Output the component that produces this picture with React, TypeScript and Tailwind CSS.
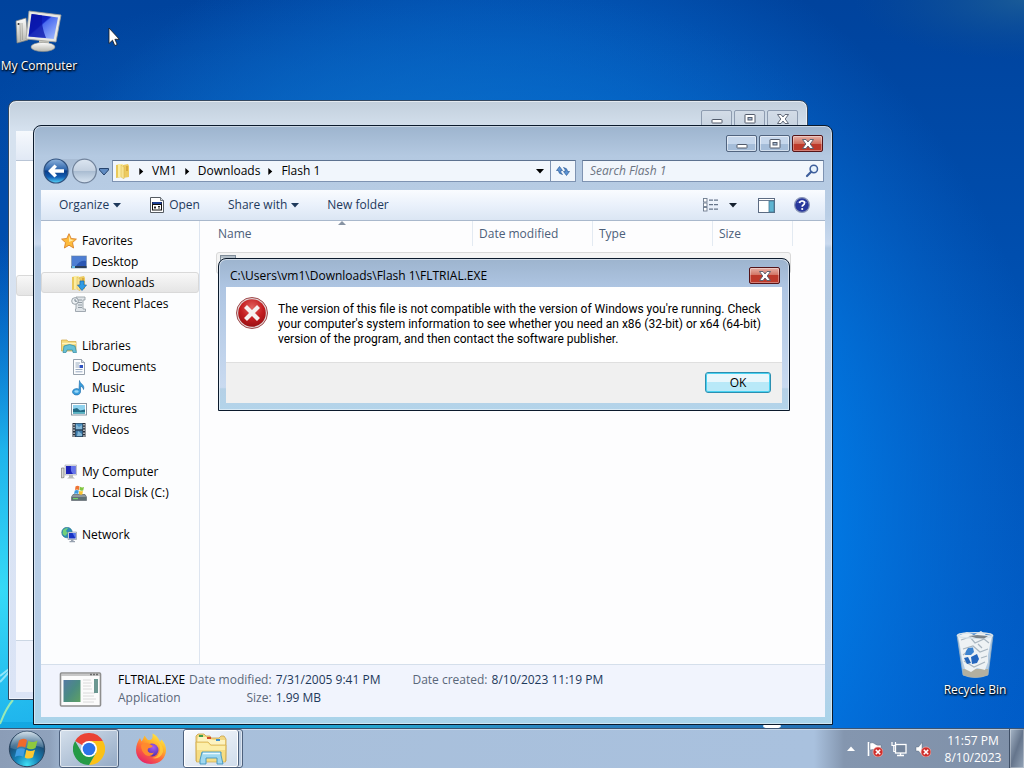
import type { ReactNode } from "react";

const ui = "font-['Open_Sans','Noto_Sans',sans-serif]";

/* ---------- desktop drawings ---------- */

function Wallpaper() {
  return (
    <svg className="absolute inset-0 h-full w-full" viewBox="0 0 1024 768" preserveAspectRatio="none" aria-hidden="true">
      <defs>
        <linearGradient id="wpBase" x1="0" y1="0" x2="0" y2="1">
          <stop offset="0" stopColor="#00439d" />
          <stop offset="0.45" stopColor="#0052b4" />
          <stop offset="1" stopColor="#005dca" />
        </linearGradient>
        <radialGradient id="wpGlow" gradientUnits="userSpaceOnUse" cx="0" cy="0" r="1" gradientTransform="translate(500 520) scale(560 620)">
          <stop offset="0" stopColor="#12a4f5" />
          <stop offset="0.55" stopColor="#0080ec" stopOpacity="0.9" />
          <stop offset="1" stopColor="#0a6fd8" stopOpacity="0" />
        </radialGradient>
        <radialGradient id="wpCyan" gradientUnits="userSpaceOnUse" cx="0" cy="0" r="1" gradientTransform="translate(0 590) scale(300 350)">
          <stop offset="0" stopColor="#36daf7" />
          <stop offset="0.4" stopColor="#22bdf0" stopOpacity="0.9" />
          <stop offset="1" stopColor="#0a80e0" stopOpacity="0" />
        </radialGradient>
        <radialGradient id="wpTop" gradientUnits="userSpaceOnUse" cx="0" cy="0" r="1" gradientTransform="translate(400 130) scale(420 150)">
          <stop offset="0" stopColor="#0c6bc4" stopOpacity="0.8" />
          <stop offset="1" stopColor="#0a5fb8" stopOpacity="0" />
        </radialGradient>
        <radialGradient id="wpCorner" gradientUnits="userSpaceOnUse" cx="0" cy="0" r="1" gradientTransform="translate(1024 0) scale(170 60)">
          <stop offset="0" stopColor="#2a6a94" stopOpacity="0.6" />
          <stop offset="1" stopColor="#145090" stopOpacity="0" />
        </radialGradient>
        <linearGradient id="wpFoot" x1="0" y1="0" x2="1" y2="0">
          <stop offset="0" stopColor="#0aa0dc" stopOpacity="0.6" />
          <stop offset="0.45" stopColor="#27a5cd" />
          <stop offset="0.7" stopColor="#2b80bd" />
          <stop offset="1" stopColor="#2270b4" />
        </linearGradient>
      </defs>
      <rect width="1024" height="768" fill="url(#wpBase)" />
      <rect width="1024" height="768" fill="url(#wpGlow)" />
      <rect width="1024" height="768" fill="url(#wpTop)" />
      <rect width="1024" height="768" fill="url(#wpCyan)" />
      <rect width="1024" height="768" fill="url(#wpCorner)" />
      <rect y="722" width="832" height="8" fill="url(#wpFoot)" />
      <path d="M0 724Q6 708 13 700" stroke="#b6f5a8" strokeWidth="2" fill="none" opacity="0.8" />
      <path d="M0 682L9 672M0 676L9 669" stroke="#d5fbff" strokeWidth="2" fill="none" opacity="0.6" />
      <ellipse cx="772" cy="726" rx="9" ry="3" fill="#fff" />
    </svg>
  );
}

function ComputerArt() {
  return (
    <svg viewBox="0 0 48 48" className="h-12 w-12" aria-hidden="true">
      <defs>
        <linearGradient id="scr" x1="0" y1="0" x2="1" y2="1">
          <stop offset="0" stopColor="#0710a0" />
          <stop offset="0.42" stopColor="#1026c8" />
          <stop offset="0.46" stopColor="#4b6cf0" />
          <stop offset="1" stopColor="#a9c2ff" />
        </linearGradient>
        <linearGradient id="plastic" x1="0" y1="0" x2="0" y2="1">
          <stop offset="0" stopColor="#fdfdfd" />
          <stop offset="1" stopColor="#b5b5ad" />
        </linearGradient>
      </defs>
      <path d="M1 15L11 12L13 34L2 37Z" fill="url(#plastic)" stroke="#84847c" strokeWidth="0.7" />
      <path d="M5 17L5.500 35M7 17L7.500 34" stroke="#a0a098" strokeWidth="0.8" />
      <circle cx="3.500" cy="18" r="1" fill="#333" />
      <path d="M24 33L34 35L34 40L24 39Z" fill="#c8c8c0" />
      <ellipse cx="28" cy="41" rx="12" ry="4.600" fill="url(#plastic)" stroke="#8f8f88" strokeWidth="0.6" />
      <path d="M14 5L46 9L41 36L11 33Z" fill="#e9e9e4" stroke="#a0a09a" strokeWidth="0.8" />
      <path d="M16.500 8L43 11.500L38.800 33L13.500 30.500Z" fill="url(#scr)" />
      <path d="M17 8L27 9.500Q26 20 31 32L13.500 30.500Z" fill="#0a16a8" opacity="0.75" />
    </svg>
  );
}

function BinArt() {
  return (
    <svg viewBox="0 0 48 48" className="h-12 w-12" aria-hidden="true">
      <path d="M6 5L42 5L37 45Q24 50 12 45Z" fill="#dfe6ea" fillOpacity="0.8" stroke="#9db2c2" strokeWidth="0.8" />
      <path d="M12 39L37 39L37 45Q24 50 12 45Z" fill="#b3b0a0" />
      <path d="M7 6L16 2L23 5L30 1L35 5L41 6L39 15L37 25L37 32L34 40L26 38L20 42L14 39L11 29L9 16Z" fill="#eef2f4" />
      <path d="M10 10L19 7L24 13L33 9L38 13M12 19L22 16L29 22L37 19M13 31L23 37L34 32M27 14L31 18M12 25L16 22M30 28L36 26" stroke="#a9b6c0" fill="none" strokeWidth="1.200" />
      <ellipse cx="24" cy="5.500" rx="17.500" ry="2.800" fill="none" stroke="#d9e3ea" strokeWidth="1.400" />
      <path d="M18 6L26 5L37 6L33 8.500L25 8Z" fill="#4d565c" opacity="0.7" />
      <path d="M17 18L22 17.500L23 22L20 25L14 25L15 21Z" fill="#3d83cf" />
      <path d="M13 28L17 27L20 33L16 34Z" fill="#2565b8" />
      <path d="M20 27L26 24L28 29L26 33L21 34Z" fill="#2466be" />
    </svg>
  );
}

function DesktopIcon({ label, className, children }: { label: string; className: string; children: ReactNode }) {
  return (
    <button type="button" className={`absolute flex w-20 flex-col items-center gap-1 ${className}`}>
      {children}
      <span className="text-[12px] leading-4 whitespace-nowrap text-white [text-shadow:1px_1px_2px_#000,0_1px_2px_#000]">{label}</span>
    </button>
  );
}

/* ---------- window chrome ---------- */

function CaptionGlyph({ kind }: { kind: "min" | "max" | "close" }) {
  return (
    <svg viewBox="0 0 14 12" className="h-3 w-[14px]" aria-hidden="true">
      {kind === "min" && <rect x="2" y="6.500" width="10" height="3.500" rx="0.500" fill="#fff" stroke="#525b6b" />}
      {kind === "max" && (
        <>
          <rect x="2" y="1.500" width="10" height="8.500" rx="0.500" fill="#fff" stroke="#525b6b" />
          <rect x="5" y="4.500" width="4" height="2.500" fill="#a9bdd6" stroke="#525b6b" />
        </>
      )}
      {kind === "close" && (
        <path d="M1.500 1.500H5L7 4L9 1.500H12.500L9.200 6L12.500 10.500H9L7 8L5 10.500H1.500L4.800 6Z" fill="#fff" stroke="#525b6b" strokeWidth="0.900" />
      )}
    </svg>
  );
}

const captionTone = {
  back: "border-[#8e9cb0] bg-linear-to-b from-[#d3dce7] to-[#c8d4e1]",
  plain: "border-[#51647f] bg-linear-to-b from-[#c6d7ec] from-50% to-[#a5bdd9] to-50% inset-ring inset-ring-white/50",
  red: "border-[#541418] bg-linear-to-b from-[#e6b0a6] from-0% via-[#d0705f] via-50% to-[#bd3a2b] to-50% inset-ring inset-ring-white/35",
};

function CaptionButton({ kind, tone, label }: { kind: "min" | "max" | "close"; tone: keyof typeof captionTone; label: string }) {
  return (
    <button type="button" aria-label={label} className={`flex h-[17px] w-[31px] items-center justify-center rounded-[2px] border ${captionTone[tone]}`}>
      <CaptionGlyph kind={kind} />
    </button>
  );
}

function CaptionButtons({ active }: { active: boolean }) {
  return (
    <div className="flex gap-[2px]">
      <CaptionButton kind="min" tone={active ? "plain" : "back"} label="Minimize" />
      <CaptionButton kind="max" tone={active ? "plain" : "back"} label="Maximize" />
      <CaptionButton kind="close" tone={active ? "red" : "back"} label="Close" />
    </div>
  );
}

function BackWindow() {
  return (
    <section className="absolute top-[100px] left-[8px] flex h-[600px] w-[800px] flex-col rounded-t-lg border border-[#33475f] bg-linear-to-b from-[#c2cfdc] from-0% via-[#d6e2ef] via-5% to-[#dbe4f6] p-[7px] pt-0 shadow-[inset_0_0_0_1px_#ffffff90]">
      <header className="flex h-[30px] items-start justify-end pt-[9px] pr-[2px]">
        <CaptionButtons active={false} />
      </header>
      <div className="h-[30px] border-b border-[#b9c5d6] bg-linear-to-b from-[#f6f9fd] to-[#e1e9f5]" />
      <div className="flex-1 bg-white pt-[114px]">
        <div className="h-[21px] rounded-[3px] border border-[#d9d9d9] bg-linear-to-b from-[#f8f8f8] to-[#e5e5e5]" />
      </div>
      <div className="h-[52px] border-t border-[#ccd7e4] bg-[#f0f3fc]" />
    </section>
  );
}

/* ---------- explorer pieces ---------- */

function Caret({ className }: { className: string }) {
  return (
    <svg viewBox="0 0 8 5" className={`h-[5px] w-2 ${className}`} aria-hidden="true">
      <path d="M0 0H8L4 4.600Z" fill="currentColor" />
    </svg>
  );
}

function Folder() {
  return (
    <>
      <path d="M1 2L7 1V14L1 15Z" fill="#e9c85a" />
      <path d="M3 1H8V14H3Z" fill="#fbeda0" />
      <path d="M8 2L13 1L14 3V14L8 15Z" fill="#ecca60" />
      <path d="M6 2L9 4V16L6 14Z" fill="#f7e391" stroke="#cfa93d" strokeWidth="0.400" />
      <path d="M11 3H13V8H11Z" fill="#c9952b" opacity="0.6" />
    </>
  );
}

function Icon({ children }: { children: ReactNode }) {
  return (
    <svg viewBox="0 0 16 16" className="h-4 w-4 shrink-0" aria-hidden="true">
      {children}
    </svg>
  );
}

const art = {
  star: (
    <Icon>
      <path d="M8 0.700L10.200 5.500L15.400 6.100L11.500 9.600L12.600 15L8 12.200L3.400 15L4.500 9.600L0.600 6.100L5.800 5.500Z" fill="#fdbb3c" stroke="#d9822b" strokeWidth="0.900" />
      <path d="M8 2.800L9.500 6.500L13 7L8 9Z" fill="#ffe9a6" />
    </Icon>
  ),
  desktop: (
    <Icon>
      <rect x="0.500" y="2" width="15" height="12" fill="#2a57b4" stroke="#8ba1b8" strokeWidth="0.800" />
      <path d="M1 2.500H15L15 7Q9 6 5 12H1Z" fill="#5d8fe0" opacity="0.7" />
      <rect x="0.500" y="12" width="15" height="2" fill="#2c3e58" />
      <rect x="1" y="12" width="3" height="2" fill="#63bde6" />
    </Icon>
  ),
  downloads: (
    <Icon>
      <Folder />
      <path d="M9 6H13V10H15.500L11 15.500L6.500 10H9Z" fill="#2f9be4" stroke="#1767ac" strokeWidth="0.700" />
    </Icon>
  ),
  recent: (
    <Icon>
      <path d="M5 1H14V4H12V13H14.500V15.500H4.500V13H5Z" fill="#dfe4e8" stroke="#8d979f" strokeWidth="0.800" />
      <path d="M7 4H11M7 6.500H11M7 9H11M7 11.500H11" stroke="#89939c" strokeWidth="0.900" />
      <circle cx="4" cy="5" r="3.300" fill="#eef2f5" stroke="#8d979f" strokeWidth="0.900" />
      <path d="M4 3V5.200H6" stroke="#5c6a75" strokeWidth="0.800" fill="none" />
    </Icon>
  ),
  libraries: (
    <Icon>
      <path d="M0.500 2H6L7 3.500H15V13H0.500Z" fill="#f5da78" stroke="#cfa543" strokeWidth="0.700" />
      <path d="M1 5.500H15" stroke="#fff3bd" strokeWidth="1.500" />
      <path d="M3 8Q8.500 5 14 8L15.500 14.500H12L11.500 12H6L5 14.500H2Z" fill="#67c0d6" stroke="#2f8aa2" strokeWidth="0.700" />
    </Icon>
  ),
  documents: (
    <Icon>
      <path d="M2.500 0.500H10.500L13.500 3.500V15.500H2.500Z" fill="#fcfdfe" stroke="#7e8a98" strokeWidth="0.800" />
      <path d="M10.500 0.500V3.500H13.500" fill="#d5dde6" stroke="#7e8a98" strokeWidth="0.700" />
      <path d="M4.500 4H9M4.500 6H8M4.500 8H8M4.500 10.500H11.500M4.500 12.800H11.500" stroke="#8fa3bb" strokeWidth="0.900" />
      <rect x="8.500" y="6" width="3.500" height="3" fill="#2c50c0" />
    </Icon>
  ),
  music: (
    <Icon>
      <path d="M8.500 0.500C9 4 14 4.500 12.500 9.500C12 7.500 11 6.500 9.500 6.500V12A4 3.200 0 1 1 8 9.300Z" fill="#3a9ddb" stroke="#1768a8" strokeWidth="0.600" />
      <ellipse cx="5.500" cy="11.500" rx="2.200" ry="1.300" fill="#9ad8f8" />
    </Icon>
  ),
  pictures: (
    <Icon>
      <rect x="0.500" y="2.500" width="15" height="11.500" fill="#fff" stroke="#7d8b98" strokeWidth="0.900" />
      <rect x="2" y="4" width="12" height="8.500" fill="#8fd2ee" />
      <path d="M2 8L6 7L9 9.500L14 8.500V12.500H2Z" fill="#246c86" />
      <path d="M2 11H14V12.500H2Z" fill="#58b5c4" />
    </Icon>
  ),
  videos: (
    <Icon>
      <rect x="1.500" y="1" width="13" height="14" fill="#272e38" />
      <rect x="4.500" y="1.500" width="7" height="6" fill="#4a90c2" />
      <rect x="4.500" y="8.500" width="7" height="6" fill="#3b78a8" />
      <path d="M5 2L8 5L11 3V7H5ZM7 9L11 12V14H6Z" fill="#84b7d6" />
      <path d="M3 2V15M13 2V15" stroke="#eef2f5" strokeWidth="1.300" strokeDasharray="1.500 1.300" />
    </Icon>
  ),
  computer: (
    <Icon>
      <path d="M0.500 4H3V13.500L0.500 14Z" fill="#d8d8d4" stroke="#7d7d78" strokeWidth="0.700" />
      <path d="M4 1H15.500V11H4Z" fill="#e3e5ea" stroke="#9095a0" strokeWidth="0.500" />
      <path d="M5 2H14.500V10H5Z" fill="#1c22b8" />
      <path d="M10 2H14.500V10H12Q9 7 10 2Z" fill="#6474ea" />
      <path d="M8 11H12V13L14 14.500H6L8 13Z" fill="#b9bbb9" />
    </Icon>
  ),
  disk: (
    <Icon>
      <path d="M2 9.500H14L15.500 12V15.500H0.500V12Z" fill="#8e989e" stroke="#59636a" strokeWidth="0.700" />
      <path d="M1 12H15V15H1Z" fill="#5f7076" />
      <rect x="2" y="13" width="5" height="1.200" fill="#74d169" />
      <path d="M4.500 1.500Q6.500 0 8.500 1.500L8 5Q6 4 4 5Z" fill="#ee7434" />
      <path d="M9 1.800Q11 3 13 2L12.200 5.500Q10 6 8.500 5Z" fill="#82c641" />
      <path d="M3.800 5.600Q5.800 4.600 7.800 5.600L7.200 9Q5 8 3 9Z" fill="#3d9be0" />
      <path d="M8.300 5.800Q10.200 6.800 12 6L11.300 9.500Q9.500 10 7.800 9Z" fill="#fcc32d" />
    </Icon>
  ),
  network: (
    <Icon>
      <circle cx="6" cy="5.500" r="5.300" fill="#2d8fb8" stroke="#186078" strokeWidth="0.500" />
      <path d="M2 3Q5 0.500 7 1L5 4L7 6L4 9L1.500 7Z" fill="#72d07a" />
      <path d="M7 5H15.500V12.500H7Z" fill="#dde2ea" stroke="#6d7890" strokeWidth="0.500" />
      <path d="M8 6H14.500V11.500H8Z" fill="#1733c4" />
      <path d="M11.500 6H14.500V11.500Z" fill="#5677ee" />
      <path d="M10 12.500H12.500V14H14V15.300H8.500V14H10Z" fill="#98a2b0" />
    </Icon>
  ),
};

type NavEntry = { label: string; icon: ReactNode; top?: boolean; selected?: boolean };

const navGroups: NavEntry[][] = [
  [
    { label: "Favorites", icon: art.star, top: true },
    { label: "Desktop", icon: art.desktop },
    { label: "Downloads", icon: art.downloads, selected: true },
    { label: "Recent Places", icon: art.recent },
  ],
  [
    { label: "Libraries", icon: art.libraries, top: true },
    { label: "Documents", icon: art.documents },
    { label: "Music", icon: art.music },
    { label: "Pictures", icon: art.pictures },
    { label: "Videos", icon: art.videos },
  ],
  [
    { label: "My Computer", icon: art.computer, top: true },
    { label: "Local Disk (C:)", icon: art.disk },
  ],
  [{ label: "Network", icon: art.network, top: true }],
];

function Sidebar() {
  return (
    <nav className="flex w-[159px] shrink-0 flex-col gap-[21px] border-r border-[#dde5f0] bg-[#fcfdfe] pt-[9px]">
      {navGroups.map((group) => (
        <ul key={group[0].label}>
          {group.map((item) => (
            <li key={item.label}>
              <a
                href="#"
                className={`flex h-[21px] items-center gap-[5px] rounded-[3px] border leading-4 whitespace-nowrap text-black ${item.top ? "pl-[19px]" : "pl-[29px]"} ${
                  item.selected ? "border-[#d9d9d9] bg-linear-to-b from-[#f8f8f8] to-[#e5e5e5]" : "border-transparent"
                }`}
              >
                {item.icon}
                {item.label}
              </a>
            </li>
          ))}
        </ul>
      ))}
    </nav>
  );
}

function NavigationRow() {
  return (
    <div className="flex h-[30px] items-center pr-px">
      <svg viewBox="0 0 68 28" className="h-7 w-[68px] shrink-0" aria-hidden="true">
        <defs>
          <linearGradient id="navBlue" x1="0" y1="0" x2="0" y2="1">
            <stop offset="0" stopColor="#8fb3dc" />
            <stop offset="0.45" stopColor="#2c64ac" />
            <stop offset="0.5" stopColor="#0b3c86" />
            <stop offset="0.75" stopColor="#135fb4" />
            <stop offset="1" stopColor="#58d8fb" />
          </linearGradient>
          <linearGradient id="navGrey" x1="0" y1="0" x2="0" y2="1">
            <stop offset="0" stopColor="#dce6f1" />
            <stop offset="0.5" stopColor="#c3d0e0" />
            <stop offset="0.52" stopColor="#aabdd2" />
            <stop offset="1" stopColor="#d8e4f1" />
          </linearGradient>
        </defs>
        <path d="M14 2H44Q30 6 29 14Q28 22 14 26Z" fill="#a2b6cf" opacity="0.7" />
        <circle cx="15" cy="14" r="12" fill="url(#navBlue)" stroke="#31527f" strokeWidth="1.200" />
        <path d="M7 14L13.500 7.500L16 9.800L13.700 12.300H23V15.700H13.700L16 18.200L13.500 20.500Z" fill="#fff" />
        <circle cx="43.500" cy="14" r="11.800" fill="url(#navGrey)" stroke="#72849c" strokeWidth="1.300" />
        <path d="M58.500 11.500H67.500V13L63 18L58.500 13Z" fill="#5f8bc2" stroke="#26446e" strokeWidth="1" />
      </svg>
      <div className="ml-[3px] flex h-[22px] flex-1 items-center border border-[#7e93b2] border-t-[#5d7290] bg-[#f1f6fc]">
        <div className="flex flex-1 items-center pl-[2px]">
          <Icon>
            <Folder />
          </Icon>
          {["VM1", "Downloads", "Flash 1"].map((crumb) => (
            <span key={crumb} className="flex items-center">
              <svg viewBox="0 0 5 8" className="mx-2 h-[7px] w-[5px]" aria-hidden="true">
                <path d="M0 0L4.500 4L0 8Z" fill="#000" />
              </svg>
              <button type="button" className="leading-4 whitespace-nowrap text-black">
                {crumb}
              </button>
            </span>
          ))}
        </div>
        <button type="button" aria-label="Previous locations" className="flex h-full w-5 items-center justify-center">
          <Caret className="text-black" />
        </button>
        <button type="button" aria-label="Refresh" className="flex h-full w-[25px] items-center justify-center border-l border-[#7e93b2]">
          <svg viewBox="0 0 16 16" className="h-4 w-4" aria-hidden="true">
            <path d="M1.500 7.500L4.500 3.500L7.500 7.500H5.700Q5.700 10 7.500 11.500Q3.500 11 3.400 7.500Z" fill="#5c93d4" stroke="#1c4d8c" strokeWidth="0.600" />
            <path d="M14.500 8.500L11.500 12.500L8.500 8.500H10.300Q10.300 6 8.500 4.500Q12.500 5 12.600 8.500Z" fill="#5c93d4" stroke="#1c4d8c" strokeWidth="0.600" />
          </svg>
        </button>
      </div>
      <label className="ml-[6px] flex h-[22px] w-[242px] items-center border border-[#7e93b2] border-t-[#5d7290] bg-[#f1f6fc] pr-[4px] pl-[7px]">
        <input type="search" aria-label="Search Flash 1" placeholder="Search Flash 1" className="min-w-0 flex-1 bg-transparent leading-4 outline-none placeholder:text-[#6c7482] placeholder:italic" />
        <svg viewBox="0 0 14 14" className="h-[14px] w-[14px]" aria-hidden="true">
          <circle cx="8.800" cy="5" r="3.700" fill="#e8f3fc" stroke="#3e5f9c" strokeWidth="1.500" />
          <path d="M6.200 7.800L2 12" stroke="#3e5f9c" strokeWidth="2.200" strokeLinecap="round" />
        </svg>
      </label>
    </div>
  );
}

function Toolbar() {
  return (
    <div className="flex h-[31px] items-center border-b border-[#a9b8cc] bg-linear-to-b from-[#fafcff] from-0% via-[#eaf1fb] via-50% to-[#dbe6f4] pr-[15px] pl-[18px] text-[#1e395b]">
      <button type="button" className="flex items-center gap-1 leading-4">
        Organize <Caret className="" />
      </button>
      <button type="button" className="ml-7 flex items-center gap-1 leading-4">
        <svg viewBox="0 0 16 16" className="h-4 w-4" aria-hidden="true">
          <path d="M1.500 0.500H11.500L14.500 3.500V15.500H1.500Z" fill="#fff" stroke="#555b62" />
          <path d="M11.500 0.500V3.500H14.500" fill="#d8dde2" stroke="#555b62" strokeWidth="0.800" />
          <rect x="3.500" y="5.500" width="9" height="7.500" fill="#fff" stroke="#111" />
          <rect x="3.500" y="5" width="9" height="2.200" fill="#1c3f94" />
          <path d="M4 7.500H12" stroke="#111" />
          <path d="M5 10.500H7M6 9V12M9 9.500H11M10 9V12" stroke="#1b1b1b" strokeWidth="0.900" />
        </svg>
        Open
      </button>
      <button type="button" className="ml-7 flex items-center gap-1 leading-4 whitespace-nowrap">
        Share with <Caret className="" />
      </button>
      <button type="button" className="ml-7 leading-4 whitespace-nowrap">
        New folder
      </button>
      <div className="ml-auto flex items-center">
        <button type="button" aria-label="Change your view" className="flex items-center gap-[10px]">
          <svg viewBox="0 0 16 14" className="h-[14px] w-4" aria-hidden="true">
            {[0.5, 5, 9.5].map((y) => (
              <g key={y}>
                <rect x="0.500" y={y} width="3.500" height="3.500" fill="#fff" stroke="#6d7b8e" strokeWidth="0.900" />
                <path d={`M6 ${y + 1.7}H15.500`} stroke="#66758a" strokeWidth="1.200" strokeDasharray="4 1" />
              </g>
            ))}
          </svg>
          <Caret className="text-[#14202e]" />
        </button>
        <button type="button" aria-label="Show the preview pane" className="ml-[21px]">
          <svg viewBox="0 0 17 15" className="h-[15px] w-[17px]" aria-hidden="true">
            <rect x="0.500" y="0.500" width="16" height="14" fill="#fff" stroke="#5c6b82" />
            <path d="M1 2.500H16" stroke="#5c6b82" strokeWidth="0.900" />
            <rect x="11" y="3" width="5" height="11" fill="#5fb5d2" stroke="#477a96" strokeWidth="0.800" />
          </svg>
        </button>
        <button type="button" aria-label="Get help" className="ml-[19px]">
          <svg viewBox="0 0 16 16" className="h-4 w-4" aria-hidden="true">
            <circle cx="8" cy="8" r="7.400" fill="#28379b" stroke="#8b97b8" strokeWidth="1.200" />
            <path d="M2.500 6Q8 1 13.500 6Q8 4 2.500 6Z" fill="#8f9be4" />
            <path d="M5.600 6.200Q5.800 4 8.100 4Q10.500 4 10.500 6Q10.500 7.200 9.300 8Q8.200 8.700 8.200 9.800" stroke="#fff" strokeWidth="1.700" fill="none" />
            <circle cx="8.200" cy="12" r="1.100" fill="#fff" />
          </svg>
        </button>
      </div>
    </div>
  );
}

function FileList() {
  return (
    <div className="min-w-0 flex-1 bg-[#fdfdfe] pl-[16px]">
      <table className="w-[577px] table-fixed border-separate border-spacing-0 text-left text-[#4c607a]">
        <thead>
          <tr className="h-[25px] align-middle leading-4">
            <th scope="col" className="relative w-[257px] border-r border-[#e3eaf2] pl-[2px] font-normal">
              Name
              <svg viewBox="0 0 8 4" className="absolute top-0 left-[122px] h-1 w-2" aria-hidden="true">
                <path d="M0 4L4 0L8 4Z" fill="#8793a3" />
              </svg>
            </th>
            <th scope="col" className="w-[120px] border-r border-[#e3eaf2] pl-[6px] font-normal">Date modified</th>
            <th scope="col" className="w-[120px] border-r border-[#e3eaf2] pl-[6px] font-normal">Type</th>
            <th scope="col" className="w-[80px] border-r border-[#e3eaf2] pl-[6px] font-normal">Size</th>
          </tr>
        </thead>
      </table>
      <div className="mt-[6px] flex h-[22px] w-[575px] items-center rounded-[3px] border border-[#d9d9d9] bg-[#f4f4f4] pl-[3px]">
        <svg viewBox="0 0 16 16" className="h-4 w-4" aria-hidden="true">
          <rect x="0.500" y="0.500" width="15" height="14" fill="#dfe5ea" stroke="#7e8b98" />
          <path d="M1 2H15" stroke="#a4b0bc" strokeWidth="1.500" />
        </svg>
      </div>
    </div>
  );
}

function DetailsPane() {
  return (
    <footer className="flex h-[53px] items-start border-t border-[#d5dfeb] bg-[#f1f4fd] pt-[7px] pl-[18px] text-[#1e395b]">
      <svg viewBox="0 0 43 36" className="h-9 w-[43px] shrink-0" aria-hidden="true">
        <defs>
          <linearGradient id="thumb" x1="0" y1="0" x2="1" y2="1">
            <stop offset="0" stopColor="#5479a4" />
            <stop offset="0.5" stopColor="#4a8b82" />
            <stop offset="1" stopColor="#5fa163" />
          </linearGradient>
        </defs>
        <rect x="1.500" y="1" width="40" height="33" rx="1" fill="#fbfbfb" stroke="#8e8e8e" strokeWidth="1.600" />
        <path d="M2 3H41" stroke="#b6b6b6" strokeWidth="1.500" />
        <path d="M31 2.500H40" stroke="#6c6c6c" strokeWidth="1.500" strokeDasharray="2 1" />
        <rect x="4.500" y="8" width="17" height="22" fill="url(#thumb)" />
        <path d="M24 8H32M24 11H33M24 14H32M24 17H33M24 21H36M24 24H35M24 27H37M24 30H35" stroke="#dadada" />
        <rect x="35" y="7" width="4" height="14" fill="#6b9791" />
      </svg>
      <div className="ml-4 grid grid-cols-[auto_auto_auto_auto_auto] gap-y-[2px] leading-4 whitespace-nowrap">
        <span className="text-black">FLTRIAL.EXE</span>
        <span className="pl-1 text-right text-[#5a6779]">Date modified:</span>
        <span className="pl-1">7/31/2005 9:41 PM</span>
        <span className="pl-8 text-[#5a6779]">Date created:</span>
        <span className="pl-1">8/10/2023 11:19 PM</span>
        <span className="text-[#5a6779]">Application</span>
        <span className="text-right text-[#5a6779]">Size:</span>
        <span className="pl-1">1.99 MB</span>
      </div>
    </footer>
  );
}

function ExplorerWindow() {
  return (
    <section className="absolute top-[125px] left-[33px] flex h-[600px] w-[800px] flex-col rounded-t-lg border border-[#0b1a2c] bg-[linear-gradient(to_bottom,#9db4ce_0,#b4c9e1_30px,#b9cee6_90px,#c9d9ee_118px,#b3cae3_122px,#b9cfe8_90%,#a9d4ea_100%)] p-[7px] pt-0 shadow-[inset_0_0_0_1px_#ffffff70]">
      <header className="flex h-[30px] items-start justify-end pt-[9px] pr-[2px]">
        <CaptionButtons active />
      </header>
      <NavigationRow />
      <div className="mt-[4px] flex min-h-0 flex-1 flex-col">
        <Toolbar />
        <div className="flex min-h-0 flex-1">
          <Sidebar />
          <FileList />
        </div>
        <DetailsPane />
      </div>
    </section>
  );
}

function ErrorDialog() {
  return (
    <div
      role="alertdialog"
      aria-labelledby="dialog-title"
      className="absolute top-[258px] left-[218px] w-[572px] rounded-t-lg border border-[#0b1a2c] bg-[linear-gradient(to_bottom,#9db4ce_0,#aec5e2_28px,#c9daf0_85%,#b5d0e6_86%,#b3d4ea_100%)] px-[7px] pb-[7px] shadow-[inset_0_0_0_1px_#ffffff80]"
    >
      <header className="flex h-[28px] items-start justify-between pt-[8px] pr-[2px] pl-[4px]">
        <h2 id="dialog-title" className="leading-[17px] whitespace-nowrap text-black">
          C:\Users\vm1\Downloads\Flash 1\FLTRIAL.EXE
        </h2>
        <CaptionButton kind="close" tone="red" label="Close" />
      </header>
      <div className="flex h-[75px] gap-[9px] bg-white pt-[10px] pl-[10px]">
        <svg viewBox="0 0 33 33" className="h-[33px] w-[33px] shrink-0" aria-hidden="true">
          <defs>
            <radialGradient id="err" cx="0.500" cy="0.300" r="0.800">
              <stop offset="0" stopColor="#e0625f" />
              <stop offset="0.5" stopColor="#c41d20" />
              <stop offset="1" stopColor="#8d0c10" />
            </radialGradient>
          </defs>
          <circle cx="16" cy="16" r="15.500" fill="#e2d6d6" stroke="#a04a4c" strokeWidth="1" />
          <circle cx="16" cy="16" r="13.800" fill="url(#err)" />
          <path d="M9.500 9.500L22.500 22.500M22.500 9.500L9.500 22.500" stroke="#f6f1f1" strokeWidth="4.200" />
        </svg>
        <p className="pt-[5px] font-['Roboto','Open_Sans',sans-serif] leading-[15px] whitespace-nowrap text-black">
          The version of this file is not compatible with the version of Windows you're running. Check
          <br />
          your computer's system information to see whether you need an x86 (32-bit) or x64 (64-bit)
          <br />
          version of the program, and then contact the software publisher.
        </p>
      </div>
      <footer className="flex h-[41px] items-start justify-end border-t border-[#dfdfdf] bg-[#f0f0f0] pt-[9px] pr-[11px]">
        <button
          type="button"
          className="h-[21px] w-[66px] rounded-[3px] border border-[#2c8fb0] bg-linear-to-b from-[#e9f7fc] from-50% to-[#b9e9f8] to-50% leading-4 text-black inset-ring inset-ring-[#48d2f2]"
        >
          OK
        </button>
      </footer>
    </div>
  );
}

/* ---------- taskbar ---------- */

function StartOrb() {
  return (
    <svg viewBox="0 0 38 38" className="h-[38px] w-[38px]" aria-hidden="true">
      <defs>
        <radialGradient id="orb" cx="0.500" cy="0.950" r="0.950">
          <stop offset="0" stopColor="#3fe0f5" />
          <stop offset="0.35" stopColor="#1583b8" />
          <stop offset="0.7" stopColor="#1b4c74" />
          <stop offset="1" stopColor="#6a8aa4" />
        </radialGradient>
        <linearGradient id="orbShine" x1="0" y1="0" x2="0" y2="1">
          <stop offset="0" stopColor="#e3eef5" stopOpacity="0.85" />
          <stop offset="1" stopColor="#8fb0c6" stopOpacity="0.25" />
        </linearGradient>
      </defs>
      <circle cx="19" cy="19" r="17.700" fill="url(#orb)" stroke="#2b4560" strokeWidth="1" />
      <path d="M2.500 18A16.500 16.500 0 0 1 35.500 18Q27 14 19 18Q11 21 2.500 18Z" fill="url(#orbShine)" />
      <path d="M11 10.500Q15 7.500 19 10L17.300 17.500Q13 15.500 9 18Z" fill="#ef6a2c" />
      <path d="M20.500 10.800Q24.500 13.500 29.500 10.500L27.500 18Q23 20.500 18.800 18Z" fill="#8fc93e" />
      <path d="M8.600 19.600Q13 17.200 17 19.200L15.200 26.700Q11 24.500 6.800 27Z" fill="#3f9de2" />
      <path d="M18.400 19.800Q22.500 22.200 27 19.700L25 27.300Q21 29.800 16.700 27.400Z" fill="#fdc832" />
    </svg>
  );
}

function ChromeLogo() {
  return (
    <svg viewBox="0 0 32 32" className="h-8 w-8" aria-hidden="true">
      <path d="M16 16L2.140 8A16 16 0 0 1 29.860 8H16Z" fill="#ea4335" />
      <path d="M16 8H29.860A16 16 0 0 1 16 32L22.930 20Z" fill="#fbc116" />
      <path d="M2.140 8A16 16 0 0 0 16 32L22.930 20L9.070 20Z" fill="#259a46" />
      <circle cx="16" cy="16" r="8" fill="#fff" />
      <circle cx="16" cy="16" r="6.300" fill="#2b73e8" />
    </svg>
  );
}

function FirefoxLogo() {
  return (
    <svg viewBox="0 0 32 32" className="h-8 w-8" aria-hidden="true">
      <defs>
        <linearGradient id="fox" x1="0.850" y1="0.050" x2="0.250" y2="1">
          <stop offset="0" stopColor="#fff04a" />
          <stop offset="0.35" stopColor="#ffb02a" />
          <stop offset="0.6" stopColor="#ff6a3a" />
          <stop offset="1" stopColor="#e4206c" />
        </linearGradient>
        <radialGradient id="foxCore" cx="0.600" cy="0.300" r="0.700">
          <stop offset="0" stopColor="#a75cf2" />
          <stop offset="1" stopColor="#5030a8" />
        </radialGradient>
      </defs>
      <path d="M16 31C7 31 1 25 1 17C1 12 3 8 5 5L6.500 8.500C8 6.500 9 4 9.500 2.500C11 5 12 6 13 7C17 7 18 6 17.500 0.500C22 2.500 24 6 25 9L26.500 6.500C29.500 10 31 13 31 17C31 25 25 31 16 31Z" fill="url(#fox)" />
      <circle cx="17" cy="17" r="6.500" fill="url(#foxCore)" />
      <path d="M6 12Q10 8.500 14.500 11L18 13Q17 15 14 15Q12 16 13 18.500Q15 21 19 19.500Q16 25 10.500 22Q6 18 6 12Z" fill="#ff8a2e" />
      <path d="M18 5Q26 9 25 17Q24 24 17 25Q25 27 28 19Q29 11 18 5Z" fill="#ffd23d" opacity="0.75" />
    </svg>
  );
}

function ExplorerLogo() {
  return (
    <svg viewBox="0 0 34 32" className="h-8 w-[34px]" aria-hidden="true">
      <path d="M2 3L4 1H10L12 3H16L17 5H25L27 3H30L32 6V28H2Z" fill="#f3d882" stroke="#c9a24a" strokeWidth="0.800" />
      <path d="M4 4H12L15 6L20 7H31V12H3Z" fill="#fdf3c0" />
      <rect x="5" y="2" width="4" height="2" fill="#3c9c4e" />
      <rect x="13" y="4" width="4" height="2" fill="#d3482c" />
      <rect x="22" y="6" width="4" height="2" fill="#3e8fd0" />
      <path d="M2 9H14L17 12H32L31.500 29H2.500Z" fill="#f6dd84" stroke="#d1ab4c" strokeWidth="0.700" />
      <path d="M3 10H13.500L16.500 13H31V17H3Z" fill="#fceeaa" />
      <path d="M8 19H27V22L29 31H23V25H12V31H6V27Z" fill="#9fd8f0" stroke="#3f93bd" strokeWidth="0.900" />
      <path d="M9 20.500H26" stroke="#e9f9ff" strokeWidth="1.500" fill="none" />
    </svg>
  );
}

function RedCross() {
  return (
    <>
      <circle cx="11" cy="11" r="5" fill="#cf2f2c" stroke="#f0b4b0" strokeWidth="0.700" />
      <path d="M8.800 8.800L13.200 13.200M13.200 8.800L8.800 13.200" stroke="#fff" strokeWidth="1.600" />
    </>
  );
}

function Taskbar() {
  return (
    <footer className="relative flex h-10 w-full items-stretch border-t border-[#3d5573] bg-[linear-gradient(to_right,#8b9db7_0,#8fa2bc_50px,#a8bfda_70px,#a9c1de_calc(100%_-_210px),#8496af_calc(100%_-_180px),#7f90a8_100%)] shadow-[inset_0_1px_0_#dbe8f4a0]">
      <button type="button" aria-label="Start" className="flex w-[59px] items-center pl-2">
        <StartOrb />
      </button>
      <button type="button" aria-label="Google Chrome" className="flex w-[60px] items-center justify-center rounded-[3px] border border-[#4d617d] bg-linear-to-br from-[#d5e0ec] to-[#94aac5] inset-ring inset-ring-white/60">
        <ChromeLogo />
      </button>
      <button type="button" aria-label="Firefox" className="flex w-[64px] items-center justify-center">
        <FirefoxLogo />
      </button>
      <div className="flex w-[60px] rounded-[3px] border border-[#4d617d] bg-[#b8c9de] pr-[3px] inset-ring inset-ring-white/50">
        <button type="button" aria-label="Windows Explorer" className="flex flex-1 items-center justify-center rounded-[3px] border-r border-[#4d617d] bg-linear-to-br from-[#fbfcfe] to-[#cfdceb] inset-ring inset-ring-white">
          <ExplorerLogo />
        </button>
      </div>
      <div className="ml-auto flex items-center">
        <button type="button" aria-label="Show hidden icons" className="p-1">
          <svg viewBox="0 0 8 5" className="h-[5px] w-2" aria-hidden="true">
            <path d="M0 5L4 0.500L8 5Z" fill="#fff" />
          </svg>
        </button>
        <div className="ml-2 flex gap-2">
          <svg viewBox="0 0 16 16" className="h-4 w-4" aria-label="Action Center" role="img">
            <path d="M1.500 1V15" stroke="#fff" strokeWidth="1.600" />
            <path d="M3 2Q6 1 8 3T14 4V10Q11 10 8.500 9T3 9Z" fill="#fff" stroke="#4d5b6e" strokeWidth="0.400" />
            <RedCross />
          </svg>
          <svg viewBox="0 0 16 16" className="h-4 w-4" aria-label="Network" role="img">
            <rect x="4.500" y="3.500" width="10.500" height="8.500" fill="#74859c" stroke="#fff" strokeWidth="1.300" />
            <path d="M9.500 12V14M6 14.500H13" stroke="#fff" strokeWidth="1.300" />
            <path d="M1 1V4.500H4.500V1M2.800 4.500V10.500H4" stroke="#fff" strokeWidth="1.200" fill="none" />
          </svg>
          <svg viewBox="0 0 16 16" className="h-4 w-4" aria-label="Volume muted" role="img">
            <path d="M1 6H3.500L7 1.500V14L3.500 10H1Z" fill="#fff" stroke="#4d5b6e" strokeWidth="0.400" />
            <RedCross />
          </svg>
        </div>
        <time className="ml-[7px] w-[70px] text-center leading-[17px] whitespace-nowrap text-white">
          11:57 PM
          <br />
          8/10/2023
        </time>
        <button type="button" aria-label="Show desktop" className="ml-px h-full w-[15px] border-l border-[#3f4f66] bg-linear-to-br from-[#a9b8c9] via-[#65758c] to-[#95a5b8] inset-ring inset-ring-white/30" />
      </div>
    </footer>
  );
}

export default function App() {
  return (
    <main className={`relative flex min-h-screen w-full flex-col overflow-hidden bg-[#0058bd] text-[12px] ${ui}`}>
      <Wallpaper />
      <div className="relative flex-1">
        <DesktopIcon label="My Computer" className="top-[6px] left-[-1px]">
          <ComputerArt />
        </DesktopIcon>
        <DesktopIcon label="Recycle Bin" className="right-[9px] bottom-[30px]">
          <BinArt />
        </DesktopIcon>
        <BackWindow />
        <ExplorerWindow />
        <ErrorDialog />
        <svg viewBox="0 0 12 20" className="absolute top-[27px] left-[108px] h-5 w-3" aria-hidden="true">
          <path d="M1 1V16.500L4.500 13.200L6.800 18.600L9.200 17.500L6.900 12.300H11.300Z" fill="#fff" stroke="#1a1a1a" strokeWidth="0.800" />
        </svg>
      </div>
      <Taskbar />
    </main>
  );
}
